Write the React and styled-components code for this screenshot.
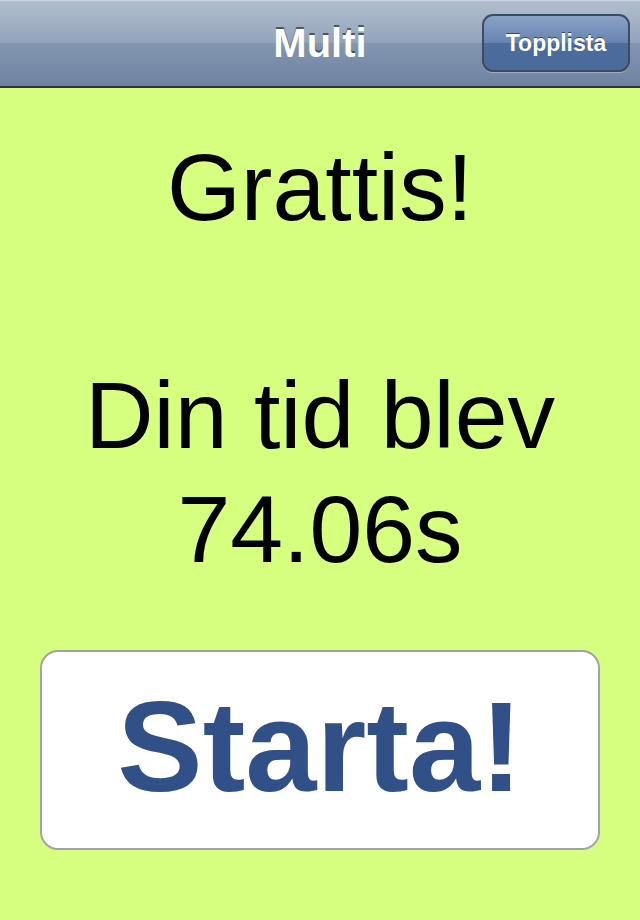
import styled, { createGlobalStyle } from 'styled-components';

const GlobalStyle = createGlobalStyle`
  html, body {
    margin: 0;
    padding: 0;
    background: #d6ff80;
  }
`;

const Screen = styled.div`
  width: 640px;
  height: 920px;
  display: flex;
  flex-direction: column;
  background: #d6ff80;
  font-family: "Liberation Sans", Arial, Helvetica, sans-serif;
  overflow: hidden;
`;

const NavBar = styled.div`
  position: relative;
  height: 86px;
  display: flex;
  align-items: center;
  justify-content: center;
  background: linear-gradient(
    to bottom,
    #b3bfcf 0%,
    #92a3ba 50%,
    #8396b0 50%,
    #6d83a2 100%
  );
  border-bottom: 2px solid #2d3339;
  box-shadow: inset 0 1px 0 #c9d2de;
`;

const NavTitle = styled.h1`
  margin: 0;
  font-size: 40px;
  font-weight: 700;
  color: #fff;
  text-shadow: 0 -2px 0 rgba(40, 50, 65, 0.7);
`;

const NavButton = styled.div`
  position: absolute;
  right: 10px;
  top: 14px;
  width: 148px;
  height: 58px;
  box-sizing: border-box;
  display: flex;
  align-items: center;
  justify-content: center;
  border: 2px solid #3c4b61;
  border-radius: 11px;
  background: linear-gradient(
    to bottom,
    #8aa3c6 0%,
    #6683b0 50%,
    #4c6c9e 50%,
    #4a6a9c 100%
  );
  box-shadow: 0 1px 0 rgba(255, 255, 255, 0.3);
  color: #fff;
  font-size: 23px;
  font-weight: 700;
  text-shadow: 0 -1px 0 rgba(30, 40, 60, 0.7);
`;

const Content = styled.div`
  display: flex;
  flex-direction: column;
  align-items: center;
  padding-top: 42px;
`;

const Message = styled.p`
  margin: 0;
  font-size: 95px;
  line-height: 114px;
  color: #000;
  text-align: center;
`;

const StartButton = styled.div`
  margin-top: 64px;
  width: 560px;
  height: 200px;
  box-sizing: border-box;
  display: flex;
  align-items: center;
  justify-content: center;
  padding-bottom: 8px;
  background: #fff;
  border: 2px solid #a3a3a3;
  border-radius: 18px;
  color: #325088;
  font-size: 128px;
  font-weight: 700;
  cursor: pointer;
`;

const App = () => {
  return (
    <>
      <GlobalStyle />
      <Screen>
        <NavBar>
          <NavTitle>Multi</NavTitle>
          <NavButton>Topplista</NavButton>
        </NavBar>
        <Content>
          <Message>
            Grattis!
            <br />
            <br />
            Din tid blev
            <br />
            74.06s
          </Message>
          <StartButton>Starta!</StartButton>
        </Content>
      </Screen>
    </>
  );
};

export default App;
